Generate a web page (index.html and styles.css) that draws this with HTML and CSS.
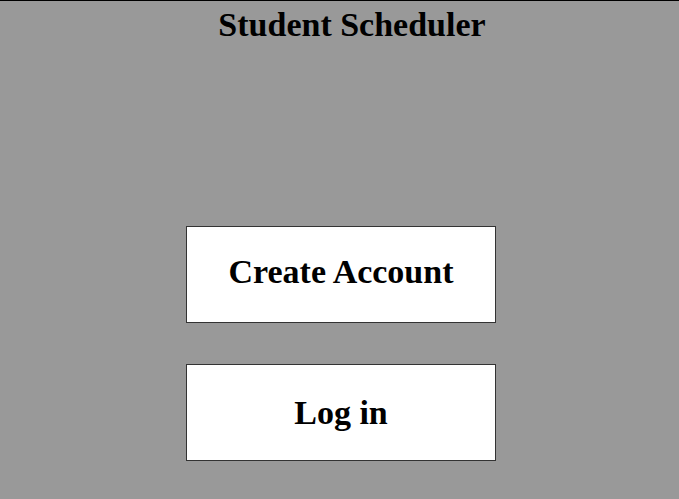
FILE: index.html
```html
<!DOCTYPE html>
<html lang="en">
<head>
  <meta charset="UTF-8">
  <meta name="viewport" content="width=device-width, initial-scale=1.0">
  <title>Student Scheduler</title>
  <link rel="stylesheet" href="styles.css">
</head>
<body>
  <div class="page">
    <h1 class="title">Student Scheduler</h1>
    <div class="actions">
      <button class="action-button create">Create Account</button>
      <button class="action-button">Log in</button>
    </div>
  </div>
</body>
</html>
```

FILE: styles.css
```css
html, body {
  margin: 0;
  height: 100%;
}
body {
  font-family: "Liberation Serif", "Times New Roman", serif;
  background-color: #999999;
}
.page {
  height: 100%;
  box-sizing: border-box;
  border-top: 1px solid #000;
  display: flex;
  flex-direction: column;
  align-items: center;
}
.title {
  margin: 5px 0 0 25px;
  font-size: 34px;
  font-weight: bold;
  line-height: 38px;
  color: #000;
}
.actions {
  margin-top: 182px;
  margin-left: 3px;
  display: flex;
  flex-direction: column;
  align-items: center;
  gap: 41px;
}
.action-button {
  width: 310px;
  height: 97px;
  padding: 0;
  background: #fff;
  border: 1px solid #333;
  font-family: inherit;
  font-size: 34px;
  font-weight: bold;
  color: #000;
  cursor: pointer;
}
.create {
  padding-bottom: 6px;
}
```
